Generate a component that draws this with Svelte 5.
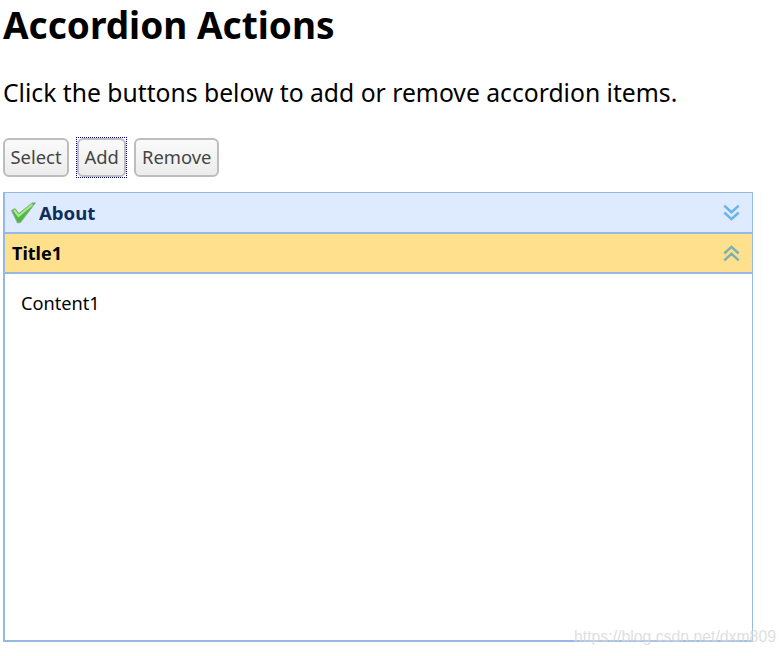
<script>
  let open = $state('Title1');
  const items = [
    { title: 'About', icon: true, content: 'About' },
    { title: 'Title1', content: 'Content1' }
  ];
</script>

<div class="page">
  <h1>Accordion Actions</h1>
  <p class="intro">Click the buttons below to add or remove accordion items.</p>

  <div class="buttons">
    <button>Select</button>
    <button class="focused">Add</button>
    <button>Remove</button>
  </div>

  <div class="accordion">
    {#each items as item}
      <button class="header" class:selected={open === item.title} onclick={() => (open = item.title)}>
        {#if item.icon}
          <svg class="check" viewBox="0 0 25 22" width="25" height="22" aria-hidden="true">
            <path d="M0.5 8.5 L4 6.5 L8 11.5 L21 1 L24.5 0.8 L9.5 20.5 L6.5 21 Z" fill="#4fb848" stroke="#8f9f95" stroke-width="0.8" stroke-linejoin="round" />
            <path d="M3 8 L7.5 14 L21.5 2.5" fill="none" stroke="#a4ee7e" stroke-width="2.2" />
          </svg>
        {/if}
        <span>{item.title}</span>
        <svg class="chevrons" viewBox="0 0 16 16" width="17" height="17" aria-hidden="true">
          {#if open === item.title}
            <path d="M1.2 8 L8 1.8 L14.8 8 M1.2 14.5 L8 8.3 L14.8 14.5" fill="none" stroke="#7fb0b0" stroke-width="2.4" />
          {:else}
            <path d="M1.2 1.5 L8 7.7 L14.8 1.5 M1.2 8 L8 14.2 L14.8 8" fill="none" stroke="#6ab4ea" stroke-width="2.4" />
          {/if}
        </svg>
      </button>
      {#if open === item.title}
        <div class="content">{item.content}</div>
      {/if}
    {/each}
  </div>

  <span class="watermark">https://blog.csdn.net/dxm809</span>
</div>

<style>
  :global(body) {
    margin: 0;
    background: #fff;
  }
  .page {
    position: relative;
    height: 656px;
    overflow: hidden;
    padding: 0 31px 0 3px;
    box-sizing: border-box;
    font-family: "Noto Sans", "Open Sans", sans-serif;
    color: #000;
  }
  h1 {
    margin: 0;
    padding-top: 1px;
    font-size: 37px;
    line-height: 48px;
    font-weight: 700;
  }
  .intro {
    margin: 24px 0 0;
    font-size: 24.7px;
    line-height: 40px;
  }
  .buttons {
    display: flex;
    gap: 8px;
    margin-top: 25px;
  }
  .buttons button {
    height: 39px;
    padding: 0 5.5px;
    border: 2px solid #bdbdbd;
    border-radius: 6px;
    background: linear-gradient(#fafafa, #ececec);
    color: #444;
    font: 18.4px/1 "Noto Sans", "Open Sans", sans-serif;
    position: relative;
  }
  .buttons .focused::after {
    content: "";
    position: absolute;
    inset: -3px;
    border: 1px dotted #000080;
    pointer-events: none;
  }
  .accordion {
    display: flex;
    flex-direction: column;
    height: 450px;
    margin-top: 15px;
    box-sizing: border-box;
    border: 1px solid #95b8e7;
    border-left-width: 2px;
    border-bottom-width: 2px;
  }
  .header {
    display: flex;
    align-items: center;
    flex: none;
    height: 41px;
    padding: 0 12px 0 6px;
    border: 0;
    border-bottom: 2px solid #95b8e7;
    background: #deebff;
    color: #0e2d5f;
    font: 700 18.6px/1 "Noto Sans", "Open Sans", sans-serif;
    text-align: left;
  }
  .header span {
    padding-top: 2px;
  }
  .header.selected {
    height: 40px;
    padding-left: 7px;
    background: #ffe08c;
    color: #000;
    font-size: 18px;
  }
  .header.selected span {
    padding-top: 0;
  }
  .check {
    margin-right: 3px;
  }
  .chevrons {
    margin-left: auto;
  }
  .content {
    flex: 1;
    padding: 16px 16px 0;
    font-size: 18.2px;
    line-height: 26px;
  }
  .watermark {
    position: absolute;
    left: 574px;
    top: 627px;
    color: rgba(190, 190, 190, 0.5);
    font: 15.8px/20px "Liberation Sans", sans-serif;
    white-space: nowrap;
    text-shadow: 0 0 2px rgba(255, 255, 255, 0.9);
  }
</style>
